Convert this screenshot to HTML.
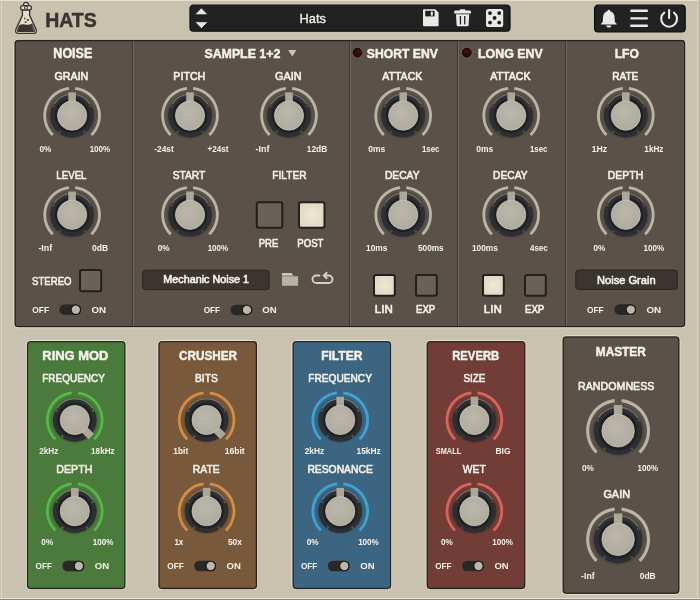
<!DOCTYPE html>
<html><head><meta charset="utf-8"><style>
html,body{margin:0;padding:0;width:700px;height:600px;overflow:hidden;background:#c8c2af}
svg{display:block;will-change:transform;font-family:"Liberation Sans",sans-serif}
</style></head><body>
<svg width="700" height="600" viewBox="0 0 700 600">
<defs>
<radialGradient id="kg" cx="0.45" cy="0.4" r="0.65"><stop offset="0" stop-color="#bbb8ab"/><stop offset="1" stop-color="#aeab9e"/></radialGradient>
<radialGradient id="led" cx="0.55" cy="0.45" r="0.6"><stop offset="0" stop-color="#4a0d13"/><stop offset="1" stop-color="#240608"/></radialGradient>
<radialGradient id="on" cx="0.5" cy="0.5" r="0.7"><stop offset="0" stop-color="#efe9d2"/><stop offset="1" stop-color="#d9d4c2"/></radialGradient>
</defs>
<rect x="0" y="0" width="700" height="600" fill="#c8c2af"/>
<rect x="0" y="0" width="700" height="1" fill="#e6e1cf"/>
<rect x="1" y="0" width="1" height="600" fill="#ddd8c6"/>
<rect x="0" y="598" width="700" height="1" fill="#e6e1cf"/>
<rect x="697" y="0" width="1" height="598" fill="#d4cebb"/>
<rect x="699" y="0" width="1" height="598" fill="#bab4a1"/>
<rect x="0" y="599" width="700" height="1" fill="#8a867c"/>
<path d="M22.4 9.6 L22.4 15.4 L15.9 29.4 Q14.5 33.4 18.6 33.4 L33.4 33.4 Q37.5 33.4 36.1 29.4 L29.6 15.4 L29.6 9.6 Z" fill="#e3dfcf" stroke="#3b3530" stroke-width="1.35" stroke-linejoin="round"/>
<path d="M19.3 24.9 Q22.4 23.8 25.4 24.6 Q28.8 25.5 32.1 23.4 L35 30.2 Q35.6 32.1 33.6 32.1 L18.4 32.1 Q16.4 32.1 17 30.2 Z" fill="#3b3530"/>
<path d="M31.6 25.6 L34 31" stroke="#8a8378" stroke-width="0.6"/>
<path d="M23.3 5.8 Q23.3 2.4 26 2.4 Q28.7 2.4 28.7 5.8" fill="#e3dfcf" stroke="#3b3530" stroke-width="1.3"/>
<rect x="20.6" y="5.6" width="10.8" height="4.4" rx="2.2" fill="#e3dfcf" stroke="#3b3530" stroke-width="1.3"/>
<circle cx="26" cy="7.8" r="1.5" fill="#f4f1e8" stroke="#3b3530" stroke-width="1.1"/>
<circle cx="24.8" cy="18.4" r="0.8" fill="#3b3530"/>
<circle cx="27.8" cy="20" r="1.1" fill="#3b3530"/>
<circle cx="25.6" cy="22.2" r="0.9" fill="#3b3530"/>
<text x="45.23" y="26.80" font-size="19.48" font-weight="bold" fill="#3b3530" textLength="51.50" lengthAdjust="spacingAndGlyphs" stroke="#3b3530" stroke-width="0.50" stroke-linejoin="round">HATS</text>
<rect x="190" y="5.2" width="320" height="26" rx="3.5" fill="#222222" stroke="#0e0e0e" stroke-width="1.2"/>
<path d="M201.4 7.8 L208.2 14.8 L194.6 14.8 Z" fill="#e6e4de" stroke="#0e0e0e" stroke-width="0.8" stroke-linejoin="round"/>
<path d="M194.6 21.7 L208.2 21.7 L201.4 28.7 Z" fill="#e6e4de" stroke="#0e0e0e" stroke-width="0.8" stroke-linejoin="round"/>
<text x="299.59" y="23.06" font-size="13.55" font-weight="normal" fill="#f2f0ea" textLength="26.33" lengthAdjust="spacingAndGlyphs" stroke="#f2f0ea" stroke-width="0.35" stroke-linejoin="round">Hats</text>
<path d="M423 10.2 Q423 9.2 424 9.2 L435.3 9.2 L438.6 12.5 L438.6 25.2 Q438.6 26.2 437.6 26.2 L424 26.2 Q423 26.2 423 25.2 Z" fill="#ebe9e4"/>
<rect x="425.2" y="10.8" width="9.4" height="5.6" fill="#1e1e1e"/>
<rect x="430.8" y="11.6" width="2" height="4" fill="#ebe9e4"/>
<path d="M454.2 11.6 Q454.2 10.4 455.6 10.4 L459.5 10.4 L460.4 9.2 L464.8 9.2 L465.7 10.4 L469.6 10.4 Q471 10.4 471 11.6 L471 13.4 L454.2 13.4 Z" fill="#ebe9e4"/>
<path d="M456 14.2 L469.2 14.2 L468.6 25 Q468.5 26.2 467.3 26.2 L457.9 26.2 Q456.7 26.2 456.6 25 Z" fill="#ebe9e4"/>
<rect x="459.8" y="16" width="1.3" height="8.4" fill="#1e1e1e"/><rect x="464.1" y="16" width="1.3" height="8.4" fill="#1e1e1e"/>
<rect x="486" y="9" width="17.2" height="18" rx="2.6" fill="#ebe9e4"/>
<circle cx="490.0" cy="13.1" r="1.9" fill="#151515"/>
<circle cx="499.2" cy="13.1" r="1.9" fill="#151515"/>
<circle cx="494.6" cy="17.9" r="1.9" fill="#151515"/>
<circle cx="490.0" cy="22.6" r="1.9" fill="#151515"/>
<circle cx="499.2" cy="22.6" r="1.9" fill="#151515"/>
<rect x="594.6" y="5.2" width="90.6" height="26.8" rx="3.5" fill="#222222" stroke="#0e0e0e" stroke-width="1.2"/>
<path d="M608.8 9.8 Q610 9.8 610.2 11.2 Q614.4 12.4 614.6 17.6 L614.8 21.2 Q615 22.8 616.6 23.8 L616.6 24.6 L601 24.6 L601 23.8 Q602.6 22.8 602.8 21.2 L603 17.6 Q603.2 12.4 607.4 11.2 Q607.6 9.8 608.8 9.8 Z" fill="#ebe9e4"/>
<path d="M606.2 25.4 L611.4 25.4 Q611 27.6 608.8 27.6 Q606.6 27.6 606.2 25.4 Z" fill="#ebe9e4"/>
<rect x="630.2" y="9.6" width="17.8" height="2.4" rx="1" fill="#ebe9e4"/>
<rect x="630.2" y="17.2" width="17.8" height="2.4" rx="1" fill="#ebe9e4"/>
<rect x="630.2" y="24.6" width="17.8" height="2.4" rx="1" fill="#ebe9e4"/>
<path d="M664.24 12.57 A7.9 7.9 0 1 0 673.96 12.57" fill="none" stroke="#ebe9e4" stroke-width="2.1" stroke-linecap="round"/>
<line x1="669.1" y1="10" x2="669.1" y2="18" stroke="#ebe9e4" stroke-width="2.1" stroke-linecap="round"/>
<rect x="14.00" y="39.50" width="671.70" height="288.20" rx="4.2" fill="none" stroke="#ece8d8" stroke-width="1"/>
<rect x="15.00" y="40.50" width="669.70" height="286.20" rx="3.2" fill="#5a5249" stroke="rgba(12,10,8,0.8)" stroke-width="1.3"/>
<rect x="132" y="41" width="1" height="285" fill="#3f3933"/>
<rect x="133" y="41" width="1" height="285" fill="#6f6860"/>
<rect x="349" y="41" width="1" height="285" fill="#3f3933"/>
<rect x="350" y="41" width="1" height="285" fill="#6f6860"/>
<rect x="457" y="41" width="1" height="285" fill="#3f3933"/>
<rect x="458" y="41" width="1" height="285" fill="#6f6860"/>
<rect x="565" y="41" width="1" height="285" fill="#3f3933"/>
<rect x="566" y="41" width="1" height="285" fill="#6f6860"/>
<text x="53.36" y="57.70" font-size="13.81" font-weight="bold" fill="#f5f2eb" textLength="38.93" lengthAdjust="spacingAndGlyphs" stroke="#f5f2eb" stroke-width="0.50" stroke-linejoin="round">NOISE</text>
<text x="204.44" y="57.60" font-size="13.52" font-weight="bold" fill="#f5f2eb" textLength="75.85" lengthAdjust="spacingAndGlyphs" stroke="#f5f2eb" stroke-width="0.50" stroke-linejoin="round">SAMPLE 1+2</text>
<path d="M288.2 50 L296.4 50 L292.3 56.6 Z" fill="#c9c5b9"/>
<text x="366.85" y="57.60" font-size="13.66" font-weight="bold" fill="#f5f2eb" textLength="71.03" lengthAdjust="spacingAndGlyphs" stroke="#f5f2eb" stroke-width="0.50" stroke-linejoin="round">SHORT ENV</text>
<text x="477.97" y="57.60" font-size="13.66" font-weight="bold" fill="#f5f2eb" textLength="64.92" lengthAdjust="spacingAndGlyphs" stroke="#f5f2eb" stroke-width="0.50" stroke-linejoin="round">LONG ENV</text>
<text x="614.69" y="57.60" font-size="13.66" font-weight="bold" fill="#f5f2eb" textLength="24.22" lengthAdjust="spacingAndGlyphs" stroke="#f5f2eb" stroke-width="0.50" stroke-linejoin="round">LFO</text>
<circle cx="357.5" cy="52.6" r="5.4" fill="none" stroke="#6b645c" stroke-width="0.8"/>
<circle cx="357.5" cy="52.6" r="4.4" fill="url(#led)" stroke="#150707" stroke-width="1"/>
<circle cx="466.8" cy="52.6" r="5.4" fill="none" stroke="#6b645c" stroke-width="0.8"/>
<circle cx="466.8" cy="52.6" r="4.4" fill="url(#led)" stroke="#150707" stroke-width="1"/>
<text x="54.50" y="80.06" font-size="10.79" font-weight="normal" fill="#f5f2eb" textLength="33.83" lengthAdjust="spacingAndGlyphs" stroke="#f5f2eb" stroke-width="0.60" stroke-linejoin="round">GRAIN</text>
<text x="173.37" y="80.06" font-size="10.93" font-weight="normal" fill="#f5f2eb" textLength="31.96" lengthAdjust="spacingAndGlyphs" stroke="#f5f2eb" stroke-width="0.60" stroke-linejoin="round">PITCH</text>
<text x="275.09" y="80.16" font-size="11.08" font-weight="normal" fill="#f5f2eb" textLength="26.55" lengthAdjust="spacingAndGlyphs" stroke="#f5f2eb" stroke-width="0.60" stroke-linejoin="round">GAIN</text>
<text x="382.22" y="80.26" font-size="10.93" font-weight="normal" fill="#f5f2eb" textLength="40.15" lengthAdjust="spacingAndGlyphs" stroke="#f5f2eb" stroke-width="0.60" stroke-linejoin="round">ATTACK</text>
<text x="490.22" y="80.26" font-size="10.93" font-weight="normal" fill="#f5f2eb" textLength="40.25" lengthAdjust="spacingAndGlyphs" stroke="#f5f2eb" stroke-width="0.60" stroke-linejoin="round">ATTACK</text>
<text x="612.14" y="80.16" font-size="10.93" font-weight="normal" fill="#f5f2eb" textLength="26.15" lengthAdjust="spacingAndGlyphs" stroke="#f5f2eb" stroke-width="0.60" stroke-linejoin="round">RATE</text>
<circle cx="72.10" cy="115.60" r="23.40" fill="rgba(0,0,0,0.1)"/>
<path d="M52.73 134.97 A27.40 27.40 0 0 1 69.00 88.38" fill="none" stroke="#bab5a6" stroke-width="2.80" stroke-linecap="butt"/>
<path d="M75.20 88.38 A27.40 27.40 0 0 1 91.47 134.97" fill="none" stroke="#bab5a6" stroke-width="2.80" stroke-linecap="butt"/>
<circle cx="72.10" cy="115.60" r="19.40" fill="#2c2e31"/>
<path d="M54.61 105.50 A20.20 20.20 0 0 1 89.59 105.50" fill="none" stroke="#2c2e31" stroke-width="1.80" stroke-linecap="butt"/>
<path d="M90.83 107.26 A20.50 20.50 0 0 1 85.28 131.30" fill="none" stroke="#2c2e31" stroke-width="2.60" stroke-linecap="butt"/>
<path d="M83.56 132.60 A20.50 20.50 0 0 1 60.64 132.60" fill="none" stroke="#2c2e31" stroke-width="2.60" stroke-linecap="butt"/>
<path d="M58.92 131.30 A20.50 20.50 0 0 1 53.37 107.26" fill="none" stroke="#2c2e31" stroke-width="2.60" stroke-linecap="butt"/>
<path d="M54.32 104.05 A21.20 21.20 0 0 1 89.88 104.05" fill="none" stroke="rgba(255,255,255,0.24)" stroke-width="1.30" stroke-linecap="butt"/>
<circle cx="72.10" cy="115.60" r="16.00" fill="none" stroke="#1f2023" stroke-width="2.60"/>
<g transform="rotate(0.0 72.10 115.60)"><rect x="68.30" y="92.30" width="7.60" height="11.00" fill="#aba898"/></g>
<circle cx="72.10" cy="115.60" r="14.60" fill="url(#kg)" stroke="#cdcabd" stroke-width="0.7"/>
<circle cx="190.00" cy="115.60" r="23.40" fill="rgba(0,0,0,0.1)"/>
<path d="M170.63 134.97 A27.40 27.40 0 0 1 186.90 88.38" fill="none" stroke="#bab5a6" stroke-width="2.80" stroke-linecap="butt"/>
<path d="M193.10 88.38 A27.40 27.40 0 0 1 209.37 134.97" fill="none" stroke="#bab5a6" stroke-width="2.80" stroke-linecap="butt"/>
<circle cx="190.00" cy="115.60" r="19.40" fill="#2c2e31"/>
<path d="M172.51 105.50 A20.20 20.20 0 0 1 207.49 105.50" fill="none" stroke="#2c2e31" stroke-width="1.80" stroke-linecap="butt"/>
<path d="M208.73 107.26 A20.50 20.50 0 0 1 203.18 131.30" fill="none" stroke="#2c2e31" stroke-width="2.60" stroke-linecap="butt"/>
<path d="M201.46 132.60 A20.50 20.50 0 0 1 178.54 132.60" fill="none" stroke="#2c2e31" stroke-width="2.60" stroke-linecap="butt"/>
<path d="M176.82 131.30 A20.50 20.50 0 0 1 171.27 107.26" fill="none" stroke="#2c2e31" stroke-width="2.60" stroke-linecap="butt"/>
<path d="M172.22 104.05 A21.20 21.20 0 0 1 207.78 104.05" fill="none" stroke="rgba(255,255,255,0.24)" stroke-width="1.30" stroke-linecap="butt"/>
<circle cx="190.00" cy="115.60" r="16.00" fill="none" stroke="#1f2023" stroke-width="2.60"/>
<g transform="rotate(0.0 190.00 115.60)"><rect x="186.20" y="92.30" width="7.60" height="11.00" fill="#aba898"/></g>
<circle cx="190.00" cy="115.60" r="14.60" fill="url(#kg)" stroke="#cdcabd" stroke-width="0.7"/>
<circle cx="289.00" cy="115.60" r="23.40" fill="rgba(0,0,0,0.1)"/>
<path d="M269.63 134.97 A27.40 27.40 0 0 1 285.90 88.38" fill="none" stroke="#bab5a6" stroke-width="2.80" stroke-linecap="butt"/>
<path d="M292.10 88.38 A27.40 27.40 0 0 1 308.37 134.97" fill="none" stroke="#bab5a6" stroke-width="2.80" stroke-linecap="butt"/>
<circle cx="289.00" cy="115.60" r="19.40" fill="#2c2e31"/>
<path d="M271.51 105.50 A20.20 20.20 0 0 1 306.49 105.50" fill="none" stroke="#2c2e31" stroke-width="1.80" stroke-linecap="butt"/>
<path d="M307.73 107.26 A20.50 20.50 0 0 1 302.18 131.30" fill="none" stroke="#2c2e31" stroke-width="2.60" stroke-linecap="butt"/>
<path d="M300.46 132.60 A20.50 20.50 0 0 1 277.54 132.60" fill="none" stroke="#2c2e31" stroke-width="2.60" stroke-linecap="butt"/>
<path d="M275.82 131.30 A20.50 20.50 0 0 1 270.27 107.26" fill="none" stroke="#2c2e31" stroke-width="2.60" stroke-linecap="butt"/>
<path d="M271.22 104.05 A21.20 21.20 0 0 1 306.78 104.05" fill="none" stroke="rgba(255,255,255,0.24)" stroke-width="1.30" stroke-linecap="butt"/>
<circle cx="289.00" cy="115.60" r="16.00" fill="none" stroke="#1f2023" stroke-width="2.60"/>
<g transform="rotate(0.0 289.00 115.60)"><rect x="285.20" y="92.30" width="7.60" height="11.00" fill="#aba898"/></g>
<circle cx="289.00" cy="115.60" r="14.60" fill="url(#kg)" stroke="#cdcabd" stroke-width="0.7"/>
<circle cx="403.20" cy="115.60" r="23.40" fill="rgba(0,0,0,0.1)"/>
<path d="M383.83 134.97 A27.40 27.40 0 0 1 400.10 88.38" fill="none" stroke="#bab5a6" stroke-width="2.80" stroke-linecap="butt"/>
<path d="M406.30 88.38 A27.40 27.40 0 0 1 422.57 134.97" fill="none" stroke="#bab5a6" stroke-width="2.80" stroke-linecap="butt"/>
<circle cx="403.20" cy="115.60" r="19.40" fill="#2c2e31"/>
<path d="M385.71 105.50 A20.20 20.20 0 0 1 420.69 105.50" fill="none" stroke="#2c2e31" stroke-width="1.80" stroke-linecap="butt"/>
<path d="M421.93 107.26 A20.50 20.50 0 0 1 416.38 131.30" fill="none" stroke="#2c2e31" stroke-width="2.60" stroke-linecap="butt"/>
<path d="M414.66 132.60 A20.50 20.50 0 0 1 391.74 132.60" fill="none" stroke="#2c2e31" stroke-width="2.60" stroke-linecap="butt"/>
<path d="M390.02 131.30 A20.50 20.50 0 0 1 384.47 107.26" fill="none" stroke="#2c2e31" stroke-width="2.60" stroke-linecap="butt"/>
<path d="M385.42 104.05 A21.20 21.20 0 0 1 420.98 104.05" fill="none" stroke="rgba(255,255,255,0.24)" stroke-width="1.30" stroke-linecap="butt"/>
<circle cx="403.20" cy="115.60" r="16.00" fill="none" stroke="#1f2023" stroke-width="2.60"/>
<g transform="rotate(0.0 403.20 115.60)"><rect x="399.40" y="92.30" width="7.60" height="11.00" fill="#aba898"/></g>
<circle cx="403.20" cy="115.60" r="14.60" fill="url(#kg)" stroke="#cdcabd" stroke-width="0.7"/>
<circle cx="511.20" cy="115.60" r="23.40" fill="rgba(0,0,0,0.1)"/>
<path d="M491.83 134.97 A27.40 27.40 0 0 1 508.10 88.38" fill="none" stroke="#bab5a6" stroke-width="2.80" stroke-linecap="butt"/>
<path d="M514.30 88.38 A27.40 27.40 0 0 1 530.57 134.97" fill="none" stroke="#bab5a6" stroke-width="2.80" stroke-linecap="butt"/>
<circle cx="511.20" cy="115.60" r="19.40" fill="#2c2e31"/>
<path d="M493.71 105.50 A20.20 20.20 0 0 1 528.69 105.50" fill="none" stroke="#2c2e31" stroke-width="1.80" stroke-linecap="butt"/>
<path d="M529.93 107.26 A20.50 20.50 0 0 1 524.38 131.30" fill="none" stroke="#2c2e31" stroke-width="2.60" stroke-linecap="butt"/>
<path d="M522.66 132.60 A20.50 20.50 0 0 1 499.74 132.60" fill="none" stroke="#2c2e31" stroke-width="2.60" stroke-linecap="butt"/>
<path d="M498.02 131.30 A20.50 20.50 0 0 1 492.47 107.26" fill="none" stroke="#2c2e31" stroke-width="2.60" stroke-linecap="butt"/>
<path d="M493.42 104.05 A21.20 21.20 0 0 1 528.98 104.05" fill="none" stroke="rgba(255,255,255,0.24)" stroke-width="1.30" stroke-linecap="butt"/>
<circle cx="511.20" cy="115.60" r="16.00" fill="none" stroke="#1f2023" stroke-width="2.60"/>
<g transform="rotate(0.0 511.20 115.60)"><rect x="507.40" y="92.30" width="7.60" height="11.00" fill="#aba898"/></g>
<circle cx="511.20" cy="115.60" r="14.60" fill="url(#kg)" stroke="#cdcabd" stroke-width="0.7"/>
<circle cx="625.80" cy="115.60" r="23.40" fill="rgba(0,0,0,0.1)"/>
<path d="M606.43 134.97 A27.40 27.40 0 0 1 622.70 88.38" fill="none" stroke="#bab5a6" stroke-width="2.80" stroke-linecap="butt"/>
<path d="M628.90 88.38 A27.40 27.40 0 0 1 645.17 134.97" fill="none" stroke="#bab5a6" stroke-width="2.80" stroke-linecap="butt"/>
<circle cx="625.80" cy="115.60" r="19.40" fill="#2c2e31"/>
<path d="M608.31 105.50 A20.20 20.20 0 0 1 643.29 105.50" fill="none" stroke="#2c2e31" stroke-width="1.80" stroke-linecap="butt"/>
<path d="M644.53 107.26 A20.50 20.50 0 0 1 638.98 131.30" fill="none" stroke="#2c2e31" stroke-width="2.60" stroke-linecap="butt"/>
<path d="M637.26 132.60 A20.50 20.50 0 0 1 614.34 132.60" fill="none" stroke="#2c2e31" stroke-width="2.60" stroke-linecap="butt"/>
<path d="M612.62 131.30 A20.50 20.50 0 0 1 607.07 107.26" fill="none" stroke="#2c2e31" stroke-width="2.60" stroke-linecap="butt"/>
<path d="M608.02 104.05 A21.20 21.20 0 0 1 643.58 104.05" fill="none" stroke="rgba(255,255,255,0.24)" stroke-width="1.30" stroke-linecap="butt"/>
<circle cx="625.80" cy="115.60" r="16.00" fill="none" stroke="#1f2023" stroke-width="2.60"/>
<g transform="rotate(0.0 625.80 115.60)"><rect x="622.00" y="92.30" width="7.60" height="11.00" fill="#aba898"/></g>
<circle cx="625.80" cy="115.60" r="14.60" fill="url(#kg)" stroke="#cdcabd" stroke-width="0.7"/>
<text x="39.53" y="152.00" font-size="9.59" font-weight="bold" fill="#f5f2eb" textLength="11.84" lengthAdjust="spacingAndGlyphs">0%</text>
<text x="89.64" y="152.00" font-size="9.59" font-weight="bold" fill="#f5f2eb" textLength="20.62" lengthAdjust="spacingAndGlyphs">100%</text>
<text x="154.22" y="152.00" font-size="9.59" font-weight="bold" fill="#f5f2eb" textLength="19.53" lengthAdjust="spacingAndGlyphs">-24st</text>
<text x="207.46" y="152.00" font-size="9.59" font-weight="bold" fill="#f5f2eb" textLength="21.04" lengthAdjust="spacingAndGlyphs">+24st</text>
<text x="255.60" y="152.00" font-size="9.59" font-weight="bold" fill="#f5f2eb" textLength="13.83" lengthAdjust="spacingAndGlyphs">-Inf</text>
<text x="306.77" y="152.00" font-size="9.59" font-weight="bold" fill="#f5f2eb" textLength="20.51" lengthAdjust="spacingAndGlyphs">12dB</text>
<text x="368.31" y="152.00" font-size="9.59" font-weight="bold" fill="#f5f2eb" textLength="16.98" lengthAdjust="spacingAndGlyphs">0ms</text>
<text x="421.96" y="152.00" font-size="9.59" font-weight="bold" fill="#f5f2eb" textLength="17.42" lengthAdjust="spacingAndGlyphs">1sec</text>
<text x="476.31" y="152.00" font-size="9.59" font-weight="bold" fill="#f5f2eb" textLength="16.98" lengthAdjust="spacingAndGlyphs">0ms</text>
<text x="529.96" y="152.00" font-size="9.59" font-weight="bold" fill="#f5f2eb" textLength="17.42" lengthAdjust="spacingAndGlyphs">1sec</text>
<text x="591.75" y="152.00" font-size="9.59" font-weight="bold" fill="#f5f2eb" textLength="15.46" lengthAdjust="spacingAndGlyphs">1Hz</text>
<text x="644.33" y="152.00" font-size="9.59" font-weight="bold" fill="#f5f2eb" textLength="19.11" lengthAdjust="spacingAndGlyphs">1kHz</text>
<text x="56.35" y="179.26" font-size="11.22" font-weight="normal" fill="#f5f2eb" textLength="30.14" lengthAdjust="spacingAndGlyphs" stroke="#f5f2eb" stroke-width="0.60" stroke-linejoin="round">LEVEL</text>
<text x="172.69" y="179.36" font-size="11.51" font-weight="normal" fill="#f5f2eb" textLength="32.60" lengthAdjust="spacingAndGlyphs" stroke="#f5f2eb" stroke-width="0.60" stroke-linejoin="round">START</text>
<text x="272.33" y="179.26" font-size="11.37" font-weight="normal" fill="#f5f2eb" textLength="34.19" lengthAdjust="spacingAndGlyphs" stroke="#f5f2eb" stroke-width="0.60" stroke-linejoin="round">FILTER</text>
<text x="384.91" y="179.16" font-size="10.93" font-weight="normal" fill="#f5f2eb" textLength="34.67" lengthAdjust="spacingAndGlyphs" stroke="#f5f2eb" stroke-width="0.60" stroke-linejoin="round">DECAY</text>
<text x="493.12" y="179.16" font-size="11.08" font-weight="normal" fill="#f5f2eb" textLength="34.46" lengthAdjust="spacingAndGlyphs" stroke="#f5f2eb" stroke-width="0.60" stroke-linejoin="round">DECAY</text>
<text x="607.78" y="179.26" font-size="11.22" font-weight="normal" fill="#f5f2eb" textLength="35.43" lengthAdjust="spacingAndGlyphs" stroke="#f5f2eb" stroke-width="0.60" stroke-linejoin="round">DEPTH</text>
<circle cx="72.10" cy="214.80" r="23.40" fill="rgba(0,0,0,0.1)"/>
<path d="M52.73 234.17 A27.40 27.40 0 0 1 69.00 187.58" fill="none" stroke="#bab5a6" stroke-width="2.80" stroke-linecap="butt"/>
<path d="M75.20 187.58 A27.40 27.40 0 0 1 91.47 234.17" fill="none" stroke="#bab5a6" stroke-width="2.80" stroke-linecap="butt"/>
<circle cx="72.10" cy="214.80" r="19.40" fill="#2c2e31"/>
<path d="M54.61 204.70 A20.20 20.20 0 0 1 89.59 204.70" fill="none" stroke="#2c2e31" stroke-width="1.80" stroke-linecap="butt"/>
<path d="M90.83 206.46 A20.50 20.50 0 0 1 85.28 230.50" fill="none" stroke="#2c2e31" stroke-width="2.60" stroke-linecap="butt"/>
<path d="M83.56 231.80 A20.50 20.50 0 0 1 60.64 231.80" fill="none" stroke="#2c2e31" stroke-width="2.60" stroke-linecap="butt"/>
<path d="M58.92 230.50 A20.50 20.50 0 0 1 53.37 206.46" fill="none" stroke="#2c2e31" stroke-width="2.60" stroke-linecap="butt"/>
<path d="M54.32 203.25 A21.20 21.20 0 0 1 89.88 203.25" fill="none" stroke="rgba(255,255,255,0.24)" stroke-width="1.30" stroke-linecap="butt"/>
<circle cx="72.10" cy="214.80" r="16.00" fill="none" stroke="#1f2023" stroke-width="2.60"/>
<g transform="rotate(0.0 72.10 214.80)"><rect x="68.30" y="191.50" width="7.60" height="11.00" fill="#aba898"/></g>
<circle cx="72.10" cy="214.80" r="14.60" fill="url(#kg)" stroke="#cdcabd" stroke-width="0.7"/>
<circle cx="190.00" cy="214.80" r="23.40" fill="rgba(0,0,0,0.1)"/>
<path d="M170.63 234.17 A27.40 27.40 0 0 1 186.90 187.58" fill="none" stroke="#bab5a6" stroke-width="2.80" stroke-linecap="butt"/>
<path d="M193.10 187.58 A27.40 27.40 0 0 1 209.37 234.17" fill="none" stroke="#bab5a6" stroke-width="2.80" stroke-linecap="butt"/>
<circle cx="190.00" cy="214.80" r="19.40" fill="#2c2e31"/>
<path d="M172.51 204.70 A20.20 20.20 0 0 1 207.49 204.70" fill="none" stroke="#2c2e31" stroke-width="1.80" stroke-linecap="butt"/>
<path d="M208.73 206.46 A20.50 20.50 0 0 1 203.18 230.50" fill="none" stroke="#2c2e31" stroke-width="2.60" stroke-linecap="butt"/>
<path d="M201.46 231.80 A20.50 20.50 0 0 1 178.54 231.80" fill="none" stroke="#2c2e31" stroke-width="2.60" stroke-linecap="butt"/>
<path d="M176.82 230.50 A20.50 20.50 0 0 1 171.27 206.46" fill="none" stroke="#2c2e31" stroke-width="2.60" stroke-linecap="butt"/>
<path d="M172.22 203.25 A21.20 21.20 0 0 1 207.78 203.25" fill="none" stroke="rgba(255,255,255,0.24)" stroke-width="1.30" stroke-linecap="butt"/>
<circle cx="190.00" cy="214.80" r="16.00" fill="none" stroke="#1f2023" stroke-width="2.60"/>
<g transform="rotate(0.0 190.00 214.80)"><rect x="186.20" y="191.50" width="7.60" height="11.00" fill="#aba898"/></g>
<circle cx="190.00" cy="214.80" r="14.60" fill="url(#kg)" stroke="#cdcabd" stroke-width="0.7"/>
<circle cx="403.20" cy="214.80" r="23.40" fill="rgba(0,0,0,0.1)"/>
<path d="M383.83 234.17 A27.40 27.40 0 0 1 400.10 187.58" fill="none" stroke="#bab5a6" stroke-width="2.80" stroke-linecap="butt"/>
<path d="M406.30 187.58 A27.40 27.40 0 0 1 422.57 234.17" fill="none" stroke="#bab5a6" stroke-width="2.80" stroke-linecap="butt"/>
<circle cx="403.20" cy="214.80" r="19.40" fill="#2c2e31"/>
<path d="M385.71 204.70 A20.20 20.20 0 0 1 420.69 204.70" fill="none" stroke="#2c2e31" stroke-width="1.80" stroke-linecap="butt"/>
<path d="M421.93 206.46 A20.50 20.50 0 0 1 416.38 230.50" fill="none" stroke="#2c2e31" stroke-width="2.60" stroke-linecap="butt"/>
<path d="M414.66 231.80 A20.50 20.50 0 0 1 391.74 231.80" fill="none" stroke="#2c2e31" stroke-width="2.60" stroke-linecap="butt"/>
<path d="M390.02 230.50 A20.50 20.50 0 0 1 384.47 206.46" fill="none" stroke="#2c2e31" stroke-width="2.60" stroke-linecap="butt"/>
<path d="M385.42 203.25 A21.20 21.20 0 0 1 420.98 203.25" fill="none" stroke="rgba(255,255,255,0.24)" stroke-width="1.30" stroke-linecap="butt"/>
<circle cx="403.20" cy="214.80" r="16.00" fill="none" stroke="#1f2023" stroke-width="2.60"/>
<g transform="rotate(0.0 403.20 214.80)"><rect x="399.40" y="191.50" width="7.60" height="11.00" fill="#aba898"/></g>
<circle cx="403.20" cy="214.80" r="14.60" fill="url(#kg)" stroke="#cdcabd" stroke-width="0.7"/>
<circle cx="511.20" cy="214.80" r="23.40" fill="rgba(0,0,0,0.1)"/>
<path d="M491.83 234.17 A27.40 27.40 0 0 1 508.10 187.58" fill="none" stroke="#bab5a6" stroke-width="2.80" stroke-linecap="butt"/>
<path d="M514.30 187.58 A27.40 27.40 0 0 1 530.57 234.17" fill="none" stroke="#bab5a6" stroke-width="2.80" stroke-linecap="butt"/>
<circle cx="511.20" cy="214.80" r="19.40" fill="#2c2e31"/>
<path d="M493.71 204.70 A20.20 20.20 0 0 1 528.69 204.70" fill="none" stroke="#2c2e31" stroke-width="1.80" stroke-linecap="butt"/>
<path d="M529.93 206.46 A20.50 20.50 0 0 1 524.38 230.50" fill="none" stroke="#2c2e31" stroke-width="2.60" stroke-linecap="butt"/>
<path d="M522.66 231.80 A20.50 20.50 0 0 1 499.74 231.80" fill="none" stroke="#2c2e31" stroke-width="2.60" stroke-linecap="butt"/>
<path d="M498.02 230.50 A20.50 20.50 0 0 1 492.47 206.46" fill="none" stroke="#2c2e31" stroke-width="2.60" stroke-linecap="butt"/>
<path d="M493.42 203.25 A21.20 21.20 0 0 1 528.98 203.25" fill="none" stroke="rgba(255,255,255,0.24)" stroke-width="1.30" stroke-linecap="butt"/>
<circle cx="511.20" cy="214.80" r="16.00" fill="none" stroke="#1f2023" stroke-width="2.60"/>
<g transform="rotate(0.0 511.20 214.80)"><rect x="507.40" y="191.50" width="7.60" height="11.00" fill="#aba898"/></g>
<circle cx="511.20" cy="214.80" r="14.60" fill="url(#kg)" stroke="#cdcabd" stroke-width="0.7"/>
<circle cx="625.80" cy="214.80" r="23.40" fill="rgba(0,0,0,0.1)"/>
<path d="M606.43 234.17 A27.40 27.40 0 0 1 622.70 187.58" fill="none" stroke="#bab5a6" stroke-width="2.80" stroke-linecap="butt"/>
<path d="M628.90 187.58 A27.40 27.40 0 0 1 645.17 234.17" fill="none" stroke="#bab5a6" stroke-width="2.80" stroke-linecap="butt"/>
<circle cx="625.80" cy="214.80" r="19.40" fill="#2c2e31"/>
<path d="M608.31 204.70 A20.20 20.20 0 0 1 643.29 204.70" fill="none" stroke="#2c2e31" stroke-width="1.80" stroke-linecap="butt"/>
<path d="M644.53 206.46 A20.50 20.50 0 0 1 638.98 230.50" fill="none" stroke="#2c2e31" stroke-width="2.60" stroke-linecap="butt"/>
<path d="M637.26 231.80 A20.50 20.50 0 0 1 614.34 231.80" fill="none" stroke="#2c2e31" stroke-width="2.60" stroke-linecap="butt"/>
<path d="M612.62 230.50 A20.50 20.50 0 0 1 607.07 206.46" fill="none" stroke="#2c2e31" stroke-width="2.60" stroke-linecap="butt"/>
<path d="M608.02 203.25 A21.20 21.20 0 0 1 643.58 203.25" fill="none" stroke="rgba(255,255,255,0.24)" stroke-width="1.30" stroke-linecap="butt"/>
<circle cx="625.80" cy="214.80" r="16.00" fill="none" stroke="#1f2023" stroke-width="2.60"/>
<g transform="rotate(0.0 625.80 214.80)"><rect x="622.00" y="191.50" width="7.60" height="11.00" fill="#aba898"/></g>
<circle cx="625.80" cy="214.80" r="14.60" fill="url(#kg)" stroke="#cdcabd" stroke-width="0.7"/>
<text x="38.40" y="251.00" font-size="9.59" font-weight="bold" fill="#f5f2eb" textLength="13.83" lengthAdjust="spacingAndGlyphs">-Inf</text>
<text x="92.01" y="251.00" font-size="9.59" font-weight="bold" fill="#f5f2eb" textLength="16.23" lengthAdjust="spacingAndGlyphs">0dB</text>
<text x="157.63" y="251.00" font-size="9.59" font-weight="bold" fill="#f5f2eb" textLength="11.84" lengthAdjust="spacingAndGlyphs">0%</text>
<text x="207.64" y="251.00" font-size="9.59" font-weight="bold" fill="#f5f2eb" textLength="20.62" lengthAdjust="spacingAndGlyphs">100%</text>
<text x="366.02" y="251.00" font-size="9.59" font-weight="bold" fill="#f5f2eb" textLength="21.37" lengthAdjust="spacingAndGlyphs">10ms</text>
<text x="418.05" y="251.00" font-size="9.59" font-weight="bold" fill="#f5f2eb" textLength="25.59" lengthAdjust="spacingAndGlyphs">500ms</text>
<text x="471.98" y="251.00" font-size="9.59" font-weight="bold" fill="#f5f2eb" textLength="25.86" lengthAdjust="spacingAndGlyphs">100ms</text>
<text x="529.93" y="251.00" font-size="9.59" font-weight="bold" fill="#f5f2eb" textLength="17.86" lengthAdjust="spacingAndGlyphs">4sec</text>
<text x="593.43" y="251.00" font-size="9.59" font-weight="bold" fill="#f5f2eb" textLength="11.84" lengthAdjust="spacingAndGlyphs">0%</text>
<text x="643.54" y="251.00" font-size="9.59" font-weight="bold" fill="#f5f2eb" textLength="20.62" lengthAdjust="spacingAndGlyphs">100%</text>
<rect x="256.80" y="202.30" width="25.50" height="25.50" rx="2" fill="#6a6257" stroke="#221f1c" stroke-width="2"/>
<rect x="299.00" y="202.30" width="25.50" height="25.50" rx="2" fill="url(#on)" stroke="#221f1c" stroke-width="2"/>
<text x="258.66" y="247.26" font-size="10.93" font-weight="normal" fill="#f5f2eb" textLength="19.61" lengthAdjust="spacingAndGlyphs" stroke="#f5f2eb" stroke-width="0.60" stroke-linejoin="round">PRE</text>
<text x="297.25" y="247.26" font-size="10.93" font-weight="normal" fill="#f5f2eb" textLength="26.23" lengthAdjust="spacingAndGlyphs" stroke="#f5f2eb" stroke-width="0.60" stroke-linejoin="round">POST</text>
<text x="32.10" y="284.76" font-size="11.08" font-weight="normal" fill="#f5f2eb" textLength="39.41" lengthAdjust="spacingAndGlyphs" stroke="#f5f2eb" stroke-width="0.60" stroke-linejoin="round">STEREO</text>
<rect x="80.00" y="270.00" width="21.20" height="21.20" rx="2" fill="#6a6257" stroke="#221f1c" stroke-width="2"/>
<text x="32.36" y="312.90" font-size="9.45" font-weight="bold" fill="#f5f2eb" textLength="16.75" lengthAdjust="spacingAndGlyphs">OFF</text>
<rect x="59.05" y="304.20" width="22.5" height="11" rx="5.5" fill="#2a2826" stroke="rgba(255,255,255,0.08)" stroke-width="1"/>
<circle cx="75.80" cy="309.70" r="4.7" fill="#bbb8aa" stroke="#161514" stroke-width="1.1"/>
<text x="91.40" y="312.90" font-size="9.45" font-weight="bold" fill="#f5f2eb" textLength="14.55" lengthAdjust="spacingAndGlyphs">ON</text>
<rect x="142.6" y="270.2" width="126.6" height="19.4" rx="3" fill="#3b3530" stroke="#2b2622" stroke-width="1"/>
<text x="163.36" y="283.36" font-size="10.79" font-weight="normal" fill="#f5f2eb" textLength="85.73" lengthAdjust="spacingAndGlyphs" stroke="#f5f2eb" stroke-width="0.60" stroke-linejoin="round">Mechanic Noise 1</text>
<path d="M282 273 L291.4 273 L293.6 276.2 L298.1 276.2 L298.1 285.8 L282 285.8 Z" fill="#b7b2a2"/>
<path d="M282 273 L291.4 273 L293.1 275.5 L282 275.5 Z" fill="#cbc7b9"/>
<path d="M282 276 L293.6 276" stroke="#6a645b" stroke-width="0.7"/>
<path d="M320.2 275.45 L316.3 275.45 A3.78 3.78 0 0 0 316.3 283.05 L328.7 283.05 A3.78 3.78 0 0 0 328.7 275.45 L323.8 275.45" fill="none" stroke="#d6d2c6" stroke-width="1.9"/>
<path d="M327.2 272.2 L323.8 275.45 L327.2 278.7" fill="none" stroke="#d6d2c6" stroke-width="1.9" stroke-linejoin="miter"/>
<text x="203.66" y="313.10" font-size="9.45" font-weight="bold" fill="#f5f2eb" textLength="16.33" lengthAdjust="spacingAndGlyphs">OFF</text>
<rect x="230.20" y="304.40" width="22.5" height="11" rx="5.5" fill="#2a2826" stroke="rgba(255,255,255,0.08)" stroke-width="1"/>
<circle cx="246.95" cy="309.90" r="4.7" fill="#bbb8aa" stroke="#161514" stroke-width="1.1"/>
<text x="262.21" y="313.10" font-size="9.45" font-weight="bold" fill="#f5f2eb" textLength="14.44" lengthAdjust="spacingAndGlyphs">ON</text>
<rect x="374.00" y="275.00" width="20.80" height="20.80" rx="2" fill="url(#on)" stroke="#221f1c" stroke-width="2"/>
<rect x="416.00" y="275.00" width="20.80" height="20.80" rx="2" fill="#6a6257" stroke="#221f1c" stroke-width="2"/>
<text x="374.80" y="313.26" font-size="10.93" font-weight="normal" fill="#f5f2eb" textLength="17.90" lengthAdjust="spacingAndGlyphs" stroke="#f5f2eb" stroke-width="0.60" stroke-linejoin="round">LIN</text>
<text x="415.95" y="313.26" font-size="10.93" font-weight="normal" fill="#f5f2eb" textLength="19.32" lengthAdjust="spacingAndGlyphs" stroke="#f5f2eb" stroke-width="0.60" stroke-linejoin="round">EXP</text>
<rect x="483.00" y="275.00" width="20.80" height="20.80" rx="2" fill="url(#on)" stroke="#221f1c" stroke-width="2"/>
<rect x="525.00" y="275.00" width="20.80" height="20.80" rx="2" fill="#6a6257" stroke="#221f1c" stroke-width="2"/>
<text x="483.80" y="313.26" font-size="10.93" font-weight="normal" fill="#f5f2eb" textLength="17.90" lengthAdjust="spacingAndGlyphs" stroke="#f5f2eb" stroke-width="0.60" stroke-linejoin="round">LIN</text>
<text x="524.95" y="313.26" font-size="10.93" font-weight="normal" fill="#f5f2eb" textLength="19.32" lengthAdjust="spacingAndGlyphs" stroke="#f5f2eb" stroke-width="0.60" stroke-linejoin="round">EXP</text>
<rect x="575.8" y="270" width="101.6" height="19.4" rx="3" fill="#3b3530" stroke="#2b2622" stroke-width="1"/>
<text x="597.13" y="283.56" font-size="10.93" font-weight="normal" fill="#f5f2eb" textLength="58.45" lengthAdjust="spacingAndGlyphs" stroke="#f5f2eb" stroke-width="0.60" stroke-linejoin="round">Noise Grain</text>
<text x="586.96" y="312.80" font-size="9.45" font-weight="bold" fill="#f5f2eb" textLength="16.75" lengthAdjust="spacingAndGlyphs">OFF</text>
<rect x="614.05" y="304.10" width="22.5" height="11" rx="5.5" fill="#2a2826" stroke="rgba(255,255,255,0.08)" stroke-width="1"/>
<circle cx="630.80" cy="309.60" r="4.7" fill="#bbb8aa" stroke="#161514" stroke-width="1.1"/>
<text x="646.40" y="312.80" font-size="9.45" font-weight="bold" fill="#f5f2eb" textLength="14.77" lengthAdjust="spacingAndGlyphs">ON</text>
<rect x="26.50" y="340.70" width="99.40" height="248.80" rx="4.2" fill="none" stroke="#ece8d8" stroke-width="1"/>
<rect x="27.50" y="341.70" width="97.40" height="246.80" rx="3.2" fill="#4a7a3c" stroke="rgba(12,10,8,0.8)" stroke-width="1.3"/>
<text x="42.33" y="360.40" font-size="12.94" font-weight="bold" fill="#f5f2eb" textLength="66.11" lengthAdjust="spacingAndGlyphs" stroke="#f5f2eb" stroke-width="0.50" stroke-linejoin="round">RING MOD</text>
<rect x="157.90" y="340.70" width="99.60" height="248.80" rx="4.2" fill="none" stroke="#ece8d8" stroke-width="1"/>
<rect x="158.90" y="341.70" width="97.60" height="246.80" rx="3.2" fill="#79593b" stroke="rgba(12,10,8,0.8)" stroke-width="1.3"/>
<text x="179.12" y="360.40" font-size="12.94" font-weight="bold" fill="#f5f2eb" textLength="57.82" lengthAdjust="spacingAndGlyphs" stroke="#f5f2eb" stroke-width="0.50" stroke-linejoin="round">CRUSHER</text>
<rect x="292.10" y="340.70" width="99.50" height="248.80" rx="4.2" fill="none" stroke="#ece8d8" stroke-width="1"/>
<rect x="293.10" y="341.70" width="97.50" height="246.80" rx="3.2" fill="#3c6581" stroke="rgba(12,10,8,0.8)" stroke-width="1.3"/>
<text x="321.21" y="360.40" font-size="12.94" font-weight="bold" fill="#f5f2eb" textLength="41.13" lengthAdjust="spacingAndGlyphs" stroke="#f5f2eb" stroke-width="0.50" stroke-linejoin="round">FILTER</text>
<rect x="426.20" y="340.70" width="99.60" height="248.80" rx="4.2" fill="none" stroke="#ece8d8" stroke-width="1"/>
<rect x="427.20" y="341.70" width="97.60" height="246.80" rx="3.2" fill="#723c37" stroke="rgba(12,10,8,0.8)" stroke-width="1.3"/>
<text x="452.14" y="360.40" font-size="12.94" font-weight="bold" fill="#f5f2eb" textLength="47.17" lengthAdjust="spacingAndGlyphs" stroke="#f5f2eb" stroke-width="0.50" stroke-linejoin="round">REVERB</text>
<text x="42.22" y="382.16" font-size="11.22" font-weight="normal" fill="#f5f2eb" textLength="62.66" lengthAdjust="spacingAndGlyphs" stroke="#f5f2eb" stroke-width="0.60" stroke-linejoin="round">FREQUENCY</text>
<text x="195.00" y="382.26" font-size="11.51" font-weight="normal" fill="#f5f2eb" textLength="22.83" lengthAdjust="spacingAndGlyphs" stroke="#f5f2eb" stroke-width="0.60" stroke-linejoin="round">BITS</text>
<text x="308.31" y="382.26" font-size="11.37" font-weight="normal" fill="#f5f2eb" textLength="63.67" lengthAdjust="spacingAndGlyphs" stroke="#f5f2eb" stroke-width="0.60" stroke-linejoin="round">FREQUENCY</text>
<text x="463.39" y="382.26" font-size="11.51" font-weight="normal" fill="#f5f2eb" textLength="21.79" lengthAdjust="spacingAndGlyphs" stroke="#f5f2eb" stroke-width="0.60" stroke-linejoin="round">SIZE</text>
<circle cx="74.80" cy="420.00" r="23.40" fill="rgba(0,0,0,0.1)"/>
<path d="M55.43 439.37 A27.40 27.40 0 0 1 71.70 392.78" fill="none" stroke="#53ba46" stroke-width="2.80" stroke-linecap="butt"/>
<path d="M77.90 392.78 A27.40 27.40 0 0 1 94.17 439.37" fill="none" stroke="#53ba46" stroke-width="2.80" stroke-linecap="butt"/>
<circle cx="74.80" cy="420.00" r="19.40" fill="#2c2e31"/>
<path d="M57.31 409.90 A20.20 20.20 0 0 1 92.29 409.90" fill="none" stroke="#2c2e31" stroke-width="1.80" stroke-linecap="butt"/>
<path d="M93.53 411.66 A20.50 20.50 0 0 1 87.98 435.70" fill="none" stroke="#2c2e31" stroke-width="2.60" stroke-linecap="butt"/>
<path d="M86.26 437.00 A20.50 20.50 0 0 1 63.34 437.00" fill="none" stroke="#2c2e31" stroke-width="2.60" stroke-linecap="butt"/>
<path d="M61.62 435.70 A20.50 20.50 0 0 1 56.07 411.66" fill="none" stroke="#2c2e31" stroke-width="2.60" stroke-linecap="butt"/>
<path d="M57.02 408.45 A21.20 21.20 0 0 1 92.58 408.45" fill="none" stroke="rgba(255,255,255,0.24)" stroke-width="1.30" stroke-linecap="butt"/>
<circle cx="74.80" cy="420.00" r="16.00" fill="none" stroke="#1f2023" stroke-width="2.60"/>
<g transform="rotate(135.0 74.80 420.00)"><rect x="71.00" y="396.70" width="7.60" height="11.00" fill="#aba898"/></g>
<circle cx="74.80" cy="420.00" r="14.60" fill="url(#kg)" stroke="#cdcabd" stroke-width="0.7"/>
<circle cx="206.60" cy="420.00" r="23.40" fill="rgba(0,0,0,0.1)"/>
<path d="M187.23 439.37 A27.40 27.40 0 0 1 203.50 392.78" fill="none" stroke="#d28d42" stroke-width="2.80" stroke-linecap="butt"/>
<path d="M209.70 392.78 A27.40 27.40 0 0 1 225.97 439.37" fill="none" stroke="#d28d42" stroke-width="2.80" stroke-linecap="butt"/>
<circle cx="206.60" cy="420.00" r="19.40" fill="#2c2e31"/>
<path d="M189.11 409.90 A20.20 20.20 0 0 1 224.09 409.90" fill="none" stroke="#2c2e31" stroke-width="1.80" stroke-linecap="butt"/>
<path d="M225.33 411.66 A20.50 20.50 0 0 1 219.78 435.70" fill="none" stroke="#2c2e31" stroke-width="2.60" stroke-linecap="butt"/>
<path d="M218.06 437.00 A20.50 20.50 0 0 1 195.14 437.00" fill="none" stroke="#2c2e31" stroke-width="2.60" stroke-linecap="butt"/>
<path d="M193.42 435.70 A20.50 20.50 0 0 1 187.87 411.66" fill="none" stroke="#2c2e31" stroke-width="2.60" stroke-linecap="butt"/>
<path d="M188.82 408.45 A21.20 21.20 0 0 1 224.38 408.45" fill="none" stroke="rgba(255,255,255,0.24)" stroke-width="1.30" stroke-linecap="butt"/>
<circle cx="206.60" cy="420.00" r="16.00" fill="none" stroke="#1f2023" stroke-width="2.60"/>
<g transform="rotate(135.0 206.60 420.00)"><rect x="202.80" y="396.70" width="7.60" height="11.00" fill="#aba898"/></g>
<circle cx="206.60" cy="420.00" r="14.60" fill="url(#kg)" stroke="#cdcabd" stroke-width="0.7"/>
<circle cx="340.20" cy="420.00" r="23.40" fill="rgba(0,0,0,0.1)"/>
<path d="M320.83 439.37 A27.40 27.40 0 0 1 337.10 392.78" fill="none" stroke="#3fa2d4" stroke-width="2.80" stroke-linecap="butt"/>
<path d="M343.30 392.78 A27.40 27.40 0 0 1 359.57 439.37" fill="none" stroke="#3fa2d4" stroke-width="2.80" stroke-linecap="butt"/>
<circle cx="340.20" cy="420.00" r="19.40" fill="#2c2e31"/>
<path d="M322.71 409.90 A20.20 20.20 0 0 1 357.69 409.90" fill="none" stroke="#2c2e31" stroke-width="1.80" stroke-linecap="butt"/>
<path d="M358.93 411.66 A20.50 20.50 0 0 1 353.38 435.70" fill="none" stroke="#2c2e31" stroke-width="2.60" stroke-linecap="butt"/>
<path d="M351.66 437.00 A20.50 20.50 0 0 1 328.74 437.00" fill="none" stroke="#2c2e31" stroke-width="2.60" stroke-linecap="butt"/>
<path d="M327.02 435.70 A20.50 20.50 0 0 1 321.47 411.66" fill="none" stroke="#2c2e31" stroke-width="2.60" stroke-linecap="butt"/>
<path d="M322.42 408.45 A21.20 21.20 0 0 1 357.98 408.45" fill="none" stroke="rgba(255,255,255,0.24)" stroke-width="1.30" stroke-linecap="butt"/>
<circle cx="340.20" cy="420.00" r="16.00" fill="none" stroke="#1f2023" stroke-width="2.60"/>
<g transform="rotate(0.0 340.20 420.00)"><rect x="336.40" y="396.70" width="7.60" height="11.00" fill="#aba898"/></g>
<circle cx="340.20" cy="420.00" r="14.60" fill="url(#kg)" stroke="#cdcabd" stroke-width="0.7"/>
<circle cx="474.40" cy="420.00" r="23.40" fill="rgba(0,0,0,0.1)"/>
<path d="M455.03 439.37 A27.40 27.40 0 0 1 471.30 392.78" fill="none" stroke="#d8645b" stroke-width="2.80" stroke-linecap="butt"/>
<path d="M477.50 392.78 A27.40 27.40 0 0 1 493.77 439.37" fill="none" stroke="#d8645b" stroke-width="2.80" stroke-linecap="butt"/>
<circle cx="474.40" cy="420.00" r="19.40" fill="#2c2e31"/>
<path d="M456.91 409.90 A20.20 20.20 0 0 1 491.89 409.90" fill="none" stroke="#2c2e31" stroke-width="1.80" stroke-linecap="butt"/>
<path d="M493.13 411.66 A20.50 20.50 0 0 1 487.58 435.70" fill="none" stroke="#2c2e31" stroke-width="2.60" stroke-linecap="butt"/>
<path d="M485.86 437.00 A20.50 20.50 0 0 1 462.94 437.00" fill="none" stroke="#2c2e31" stroke-width="2.60" stroke-linecap="butt"/>
<path d="M461.22 435.70 A20.50 20.50 0 0 1 455.67 411.66" fill="none" stroke="#2c2e31" stroke-width="2.60" stroke-linecap="butt"/>
<path d="M456.62 408.45 A21.20 21.20 0 0 1 492.18 408.45" fill="none" stroke="rgba(255,255,255,0.24)" stroke-width="1.30" stroke-linecap="butt"/>
<circle cx="474.40" cy="420.00" r="16.00" fill="none" stroke="#1f2023" stroke-width="2.60"/>
<g transform="rotate(0.0 474.40 420.00)"><rect x="470.60" y="396.70" width="7.60" height="11.00" fill="#aba898"/></g>
<circle cx="474.40" cy="420.00" r="14.60" fill="url(#kg)" stroke="#cdcabd" stroke-width="0.7"/>
<text x="39.22" y="453.90" font-size="9.16" font-weight="bold" fill="#f5f2eb" textLength="19.18" lengthAdjust="spacingAndGlyphs">2kHz</text>
<text x="91.09" y="453.90" font-size="9.16" font-weight="bold" fill="#f5f2eb" textLength="23.61" lengthAdjust="spacingAndGlyphs">18kHz</text>
<text x="173.37" y="453.90" font-size="9.16" font-weight="bold" fill="#f5f2eb" textLength="14.83" lengthAdjust="spacingAndGlyphs">1bit</text>
<text x="224.86" y="453.90" font-size="9.16" font-weight="bold" fill="#f5f2eb" textLength="19.84" lengthAdjust="spacingAndGlyphs">16bit</text>
<text x="304.71" y="453.90" font-size="9.16" font-weight="bold" fill="#f5f2eb" textLength="19.59" lengthAdjust="spacingAndGlyphs">2kHz</text>
<text x="356.47" y="453.90" font-size="9.16" font-weight="bold" fill="#f5f2eb" textLength="24.23" lengthAdjust="spacingAndGlyphs">15kHz</text>
<text x="435.79" y="453.90" font-size="9.16" font-weight="bold" fill="#f5f2eb" textLength="25.44" lengthAdjust="spacingAndGlyphs">SMALL</text>
<text x="495.43" y="453.90" font-size="9.16" font-weight="bold" fill="#f5f2eb" textLength="15.09" lengthAdjust="spacingAndGlyphs">BIG</text>
<text x="56.37" y="473.36" font-size="11.80" font-weight="normal" fill="#f5f2eb" textLength="35.96" lengthAdjust="spacingAndGlyphs" stroke="#f5f2eb" stroke-width="0.60" stroke-linejoin="round">DEPTH</text>
<text x="192.82" y="473.26" font-size="11.51" font-weight="normal" fill="#f5f2eb" textLength="26.77" lengthAdjust="spacingAndGlyphs" stroke="#f5f2eb" stroke-width="0.60" stroke-linejoin="round">RATE</text>
<text x="307.39" y="473.26" font-size="11.37" font-weight="normal" fill="#f5f2eb" textLength="65.41" lengthAdjust="spacingAndGlyphs" stroke="#f5f2eb" stroke-width="0.60" stroke-linejoin="round">RESONANCE</text>
<text x="462.79" y="473.36" font-size="11.80" font-weight="normal" fill="#f5f2eb" textLength="22.90" lengthAdjust="spacingAndGlyphs" stroke="#f5f2eb" stroke-width="0.60" stroke-linejoin="round">WET</text>
<circle cx="74.80" cy="511.20" r="23.40" fill="rgba(0,0,0,0.1)"/>
<path d="M55.43 530.57 A27.40 27.40 0 0 1 71.70 483.98" fill="none" stroke="#53ba46" stroke-width="2.80" stroke-linecap="butt"/>
<path d="M77.90 483.98 A27.40 27.40 0 0 1 94.17 530.57" fill="none" stroke="#53ba46" stroke-width="2.80" stroke-linecap="butt"/>
<circle cx="74.80" cy="511.20" r="19.40" fill="#2c2e31"/>
<path d="M57.31 501.10 A20.20 20.20 0 0 1 92.29 501.10" fill="none" stroke="#2c2e31" stroke-width="1.80" stroke-linecap="butt"/>
<path d="M93.53 502.86 A20.50 20.50 0 0 1 87.98 526.90" fill="none" stroke="#2c2e31" stroke-width="2.60" stroke-linecap="butt"/>
<path d="M86.26 528.20 A20.50 20.50 0 0 1 63.34 528.20" fill="none" stroke="#2c2e31" stroke-width="2.60" stroke-linecap="butt"/>
<path d="M61.62 526.90 A20.50 20.50 0 0 1 56.07 502.86" fill="none" stroke="#2c2e31" stroke-width="2.60" stroke-linecap="butt"/>
<path d="M57.02 499.65 A21.20 21.20 0 0 1 92.58 499.65" fill="none" stroke="rgba(255,255,255,0.24)" stroke-width="1.30" stroke-linecap="butt"/>
<circle cx="74.80" cy="511.20" r="16.00" fill="none" stroke="#1f2023" stroke-width="2.60"/>
<g transform="rotate(0.0 74.80 511.20)"><rect x="71.00" y="487.90" width="7.60" height="11.00" fill="#aba898"/></g>
<circle cx="74.80" cy="511.20" r="14.60" fill="url(#kg)" stroke="#cdcabd" stroke-width="0.7"/>
<circle cx="206.60" cy="511.20" r="23.40" fill="rgba(0,0,0,0.1)"/>
<path d="M187.23 530.57 A27.40 27.40 0 0 1 203.50 483.98" fill="none" stroke="#d28d42" stroke-width="2.80" stroke-linecap="butt"/>
<path d="M209.70 483.98 A27.40 27.40 0 0 1 225.97 530.57" fill="none" stroke="#d28d42" stroke-width="2.80" stroke-linecap="butt"/>
<circle cx="206.60" cy="511.20" r="19.40" fill="#2c2e31"/>
<path d="M189.11 501.10 A20.20 20.20 0 0 1 224.09 501.10" fill="none" stroke="#2c2e31" stroke-width="1.80" stroke-linecap="butt"/>
<path d="M225.33 502.86 A20.50 20.50 0 0 1 219.78 526.90" fill="none" stroke="#2c2e31" stroke-width="2.60" stroke-linecap="butt"/>
<path d="M218.06 528.20 A20.50 20.50 0 0 1 195.14 528.20" fill="none" stroke="#2c2e31" stroke-width="2.60" stroke-linecap="butt"/>
<path d="M193.42 526.90 A20.50 20.50 0 0 1 187.87 502.86" fill="none" stroke="#2c2e31" stroke-width="2.60" stroke-linecap="butt"/>
<path d="M188.82 499.65 A21.20 21.20 0 0 1 224.38 499.65" fill="none" stroke="rgba(255,255,255,0.24)" stroke-width="1.30" stroke-linecap="butt"/>
<circle cx="206.60" cy="511.20" r="16.00" fill="none" stroke="#1f2023" stroke-width="2.60"/>
<g transform="rotate(0.0 206.60 511.20)"><rect x="202.80" y="487.90" width="7.60" height="11.00" fill="#aba898"/></g>
<circle cx="206.60" cy="511.20" r="14.60" fill="url(#kg)" stroke="#cdcabd" stroke-width="0.7"/>
<circle cx="340.20" cy="511.20" r="23.40" fill="rgba(0,0,0,0.1)"/>
<path d="M320.83 530.57 A27.40 27.40 0 0 1 337.10 483.98" fill="none" stroke="#3fa2d4" stroke-width="2.80" stroke-linecap="butt"/>
<path d="M343.30 483.98 A27.40 27.40 0 0 1 359.57 530.57" fill="none" stroke="#3fa2d4" stroke-width="2.80" stroke-linecap="butt"/>
<circle cx="340.20" cy="511.20" r="19.40" fill="#2c2e31"/>
<path d="M322.71 501.10 A20.20 20.20 0 0 1 357.69 501.10" fill="none" stroke="#2c2e31" stroke-width="1.80" stroke-linecap="butt"/>
<path d="M358.93 502.86 A20.50 20.50 0 0 1 353.38 526.90" fill="none" stroke="#2c2e31" stroke-width="2.60" stroke-linecap="butt"/>
<path d="M351.66 528.20 A20.50 20.50 0 0 1 328.74 528.20" fill="none" stroke="#2c2e31" stroke-width="2.60" stroke-linecap="butt"/>
<path d="M327.02 526.90 A20.50 20.50 0 0 1 321.47 502.86" fill="none" stroke="#2c2e31" stroke-width="2.60" stroke-linecap="butt"/>
<path d="M322.42 499.65 A21.20 21.20 0 0 1 357.98 499.65" fill="none" stroke="rgba(255,255,255,0.24)" stroke-width="1.30" stroke-linecap="butt"/>
<circle cx="340.20" cy="511.20" r="16.00" fill="none" stroke="#1f2023" stroke-width="2.60"/>
<g transform="rotate(0.0 340.20 511.20)"><rect x="336.40" y="487.90" width="7.60" height="11.00" fill="#aba898"/></g>
<circle cx="340.20" cy="511.20" r="14.60" fill="url(#kg)" stroke="#cdcabd" stroke-width="0.7"/>
<circle cx="474.40" cy="511.20" r="23.40" fill="rgba(0,0,0,0.1)"/>
<path d="M455.03 530.57 A27.40 27.40 0 0 1 471.30 483.98" fill="none" stroke="#d8645b" stroke-width="2.80" stroke-linecap="butt"/>
<path d="M477.50 483.98 A27.40 27.40 0 0 1 493.77 530.57" fill="none" stroke="#d8645b" stroke-width="2.80" stroke-linecap="butt"/>
<circle cx="474.40" cy="511.20" r="19.40" fill="#2c2e31"/>
<path d="M456.91 501.10 A20.20 20.20 0 0 1 491.89 501.10" fill="none" stroke="#2c2e31" stroke-width="1.80" stroke-linecap="butt"/>
<path d="M493.13 502.86 A20.50 20.50 0 0 1 487.58 526.90" fill="none" stroke="#2c2e31" stroke-width="2.60" stroke-linecap="butt"/>
<path d="M485.86 528.20 A20.50 20.50 0 0 1 462.94 528.20" fill="none" stroke="#2c2e31" stroke-width="2.60" stroke-linecap="butt"/>
<path d="M461.22 526.90 A20.50 20.50 0 0 1 455.67 502.86" fill="none" stroke="#2c2e31" stroke-width="2.60" stroke-linecap="butt"/>
<path d="M456.62 499.65 A21.20 21.20 0 0 1 492.18 499.65" fill="none" stroke="rgba(255,255,255,0.24)" stroke-width="1.30" stroke-linecap="butt"/>
<circle cx="474.40" cy="511.20" r="16.00" fill="none" stroke="#1f2023" stroke-width="2.60"/>
<g transform="rotate(0.0 474.40 511.20)"><rect x="470.60" y="487.90" width="7.60" height="11.00" fill="#aba898"/></g>
<circle cx="474.40" cy="511.20" r="14.60" fill="url(#kg)" stroke="#cdcabd" stroke-width="0.7"/>
<text x="41.33" y="545.00" font-size="9.30" font-weight="bold" fill="#f5f2eb" textLength="11.84" lengthAdjust="spacingAndGlyphs">0%</text>
<text x="92.74" y="545.00" font-size="9.30" font-weight="bold" fill="#f5f2eb" textLength="20.62" lengthAdjust="spacingAndGlyphs">100%</text>
<text x="174.39" y="545.00" font-size="9.30" font-weight="bold" fill="#f5f2eb" textLength="8.97" lengthAdjust="spacingAndGlyphs">1x</text>
<text x="227.89" y="545.00" font-size="9.30" font-weight="bold" fill="#f5f2eb" textLength="14.02" lengthAdjust="spacingAndGlyphs">50x</text>
<text x="306.73" y="545.00" font-size="9.30" font-weight="bold" fill="#f5f2eb" textLength="11.84" lengthAdjust="spacingAndGlyphs">0%</text>
<text x="358.14" y="545.00" font-size="9.30" font-weight="bold" fill="#f5f2eb" textLength="20.62" lengthAdjust="spacingAndGlyphs">100%</text>
<text x="440.93" y="545.00" font-size="9.30" font-weight="bold" fill="#f5f2eb" textLength="11.84" lengthAdjust="spacingAndGlyphs">0%</text>
<text x="492.34" y="545.00" font-size="9.30" font-weight="bold" fill="#f5f2eb" textLength="20.62" lengthAdjust="spacingAndGlyphs">100%</text>
<text x="35.56" y="569.20" font-size="9.45" font-weight="bold" fill="#f5f2eb" textLength="16.33" lengthAdjust="spacingAndGlyphs">OFF</text>
<rect x="62.15" y="560.50" width="22.5" height="11" rx="5.5" fill="#2a2826" stroke="rgba(255,255,255,0.08)" stroke-width="1"/>
<circle cx="78.90" cy="566.00" r="4.7" fill="#bbb8aa" stroke="#161514" stroke-width="1.1"/>
<text x="94.81" y="569.20" font-size="9.45" font-weight="bold" fill="#f5f2eb" textLength="14.34" lengthAdjust="spacingAndGlyphs">ON</text>
<text x="167.36" y="569.20" font-size="9.45" font-weight="bold" fill="#f5f2eb" textLength="16.33" lengthAdjust="spacingAndGlyphs">OFF</text>
<rect x="193.95" y="560.50" width="22.5" height="11" rx="5.5" fill="#2a2826" stroke="rgba(255,255,255,0.08)" stroke-width="1"/>
<circle cx="210.70" cy="566.00" r="4.7" fill="#bbb8aa" stroke="#161514" stroke-width="1.1"/>
<text x="226.61" y="569.20" font-size="9.45" font-weight="bold" fill="#f5f2eb" textLength="14.34" lengthAdjust="spacingAndGlyphs">ON</text>
<text x="300.96" y="569.20" font-size="9.45" font-weight="bold" fill="#f5f2eb" textLength="16.33" lengthAdjust="spacingAndGlyphs">OFF</text>
<rect x="327.55" y="560.50" width="22.5" height="11" rx="5.5" fill="#2a2826" stroke="rgba(255,255,255,0.08)" stroke-width="1"/>
<circle cx="344.30" cy="566.00" r="4.7" fill="#bbb8aa" stroke="#161514" stroke-width="1.1"/>
<text x="360.21" y="569.20" font-size="9.45" font-weight="bold" fill="#f5f2eb" textLength="14.34" lengthAdjust="spacingAndGlyphs">ON</text>
<text x="435.16" y="569.20" font-size="9.45" font-weight="bold" fill="#f5f2eb" textLength="16.33" lengthAdjust="spacingAndGlyphs">OFF</text>
<rect x="461.75" y="560.50" width="22.5" height="11" rx="5.5" fill="#2a2826" stroke="rgba(255,255,255,0.08)" stroke-width="1"/>
<circle cx="478.50" cy="566.00" r="4.7" fill="#bbb8aa" stroke="#161514" stroke-width="1.1"/>
<text x="494.41" y="569.20" font-size="9.45" font-weight="bold" fill="#f5f2eb" textLength="14.34" lengthAdjust="spacingAndGlyphs">ON</text>
<rect x="562.10" y="335.90" width="117.80" height="258.40" rx="4.2" fill="none" stroke="#ece8d8" stroke-width="1"/>
<rect x="563.10" y="336.90" width="115.80" height="256.40" rx="3.2" fill="#5a5249" stroke="rgba(12,10,8,0.8)" stroke-width="1.3"/>
<text x="595.81" y="356.30" font-size="12.79" font-weight="bold" fill="#f5f2eb" textLength="49.93" lengthAdjust="spacingAndGlyphs" stroke="#f5f2eb" stroke-width="0.50" stroke-linejoin="round">MASTER</text>
<text x="578.07" y="390.16" font-size="11.22" font-weight="normal" fill="#f5f2eb" textLength="76.38" lengthAdjust="spacingAndGlyphs" stroke="#f5f2eb" stroke-width="0.60" stroke-linejoin="round">RANDOMNESS</text>
<circle cx="618.10" cy="430.80" r="25.97" fill="rgba(0,0,0,0.1)"/>
<path d="M596.59 452.31 A30.41 30.41 0 0 1 614.66 400.58" fill="none" stroke="#bab5a6" stroke-width="3.11" stroke-linecap="butt"/>
<path d="M621.54 400.58 A30.41 30.41 0 0 1 639.61 452.31" fill="none" stroke="#bab5a6" stroke-width="3.11" stroke-linecap="butt"/>
<circle cx="618.10" cy="430.80" r="21.53" fill="#2c2e31"/>
<path d="M598.68 419.59 A22.42 22.42 0 0 1 637.52 419.59" fill="none" stroke="#2c2e31" stroke-width="2.00" stroke-linecap="butt"/>
<path d="M638.89 421.54 A22.76 22.76 0 0 1 632.73 448.23" fill="none" stroke="#2c2e31" stroke-width="2.89" stroke-linecap="butt"/>
<path d="M630.82 449.66 A22.76 22.76 0 0 1 605.38 449.66" fill="none" stroke="#2c2e31" stroke-width="2.89" stroke-linecap="butt"/>
<path d="M603.47 448.23 A22.76 22.76 0 0 1 597.31 421.54" fill="none" stroke="#2c2e31" stroke-width="2.89" stroke-linecap="butt"/>
<path d="M598.36 417.98 A23.53 23.53 0 0 1 637.84 417.98" fill="none" stroke="rgba(255,255,255,0.24)" stroke-width="1.44" stroke-linecap="butt"/>
<circle cx="618.10" cy="430.80" r="17.76" fill="none" stroke="#1f2023" stroke-width="2.89"/>
<g transform="rotate(0.0 618.10 430.80)"><rect x="613.88" y="404.94" width="8.44" height="12.21" fill="#aba898"/></g>
<circle cx="618.10" cy="430.80" r="16.21" fill="url(#kg)" stroke="#cdcabd" stroke-width="0.7"/>
<text x="582.03" y="471.00" font-size="9.59" font-weight="bold" fill="#f5f2eb" textLength="11.84" lengthAdjust="spacingAndGlyphs">0%</text>
<text x="637.54" y="471.00" font-size="9.59" font-weight="bold" fill="#f5f2eb" textLength="20.62" lengthAdjust="spacingAndGlyphs">100%</text>
<text x="603.39" y="498.36" font-size="11.22" font-weight="normal" fill="#f5f2eb" textLength="26.66" lengthAdjust="spacingAndGlyphs" stroke="#f5f2eb" stroke-width="0.60" stroke-linejoin="round">GAIN</text>
<circle cx="618.10" cy="539.30" r="25.97" fill="rgba(0,0,0,0.1)"/>
<path d="M596.59 560.81 A30.41 30.41 0 0 1 614.66 509.08" fill="none" stroke="#bab5a6" stroke-width="3.11" stroke-linecap="butt"/>
<path d="M621.54 509.08 A30.41 30.41 0 0 1 639.61 560.81" fill="none" stroke="#bab5a6" stroke-width="3.11" stroke-linecap="butt"/>
<circle cx="618.10" cy="539.30" r="21.53" fill="#2c2e31"/>
<path d="M598.68 528.09 A22.42 22.42 0 0 1 637.52 528.09" fill="none" stroke="#2c2e31" stroke-width="2.00" stroke-linecap="butt"/>
<path d="M638.89 530.04 A22.76 22.76 0 0 1 632.73 556.73" fill="none" stroke="#2c2e31" stroke-width="2.89" stroke-linecap="butt"/>
<path d="M630.82 558.16 A22.76 22.76 0 0 1 605.38 558.16" fill="none" stroke="#2c2e31" stroke-width="2.89" stroke-linecap="butt"/>
<path d="M603.47 556.73 A22.76 22.76 0 0 1 597.31 530.04" fill="none" stroke="#2c2e31" stroke-width="2.89" stroke-linecap="butt"/>
<path d="M598.36 526.48 A23.53 23.53 0 0 1 637.84 526.48" fill="none" stroke="rgba(255,255,255,0.24)" stroke-width="1.44" stroke-linecap="butt"/>
<circle cx="618.10" cy="539.30" r="17.76" fill="none" stroke="#1f2023" stroke-width="2.89"/>
<g transform="rotate(0.0 618.10 539.30)"><rect x="613.88" y="513.44" width="8.44" height="12.21" fill="#aba898"/></g>
<circle cx="618.10" cy="539.30" r="16.21" fill="url(#kg)" stroke="#cdcabd" stroke-width="0.7"/>
<text x="581.11" y="578.90" font-size="9.45" font-weight="bold" fill="#f5f2eb" textLength="13.42" lengthAdjust="spacingAndGlyphs">-Inf</text>
<text x="639.71" y="578.90" font-size="9.45" font-weight="bold" fill="#f5f2eb" textLength="16.02" lengthAdjust="spacingAndGlyphs">0dB</text>
</svg>
</body></html>
